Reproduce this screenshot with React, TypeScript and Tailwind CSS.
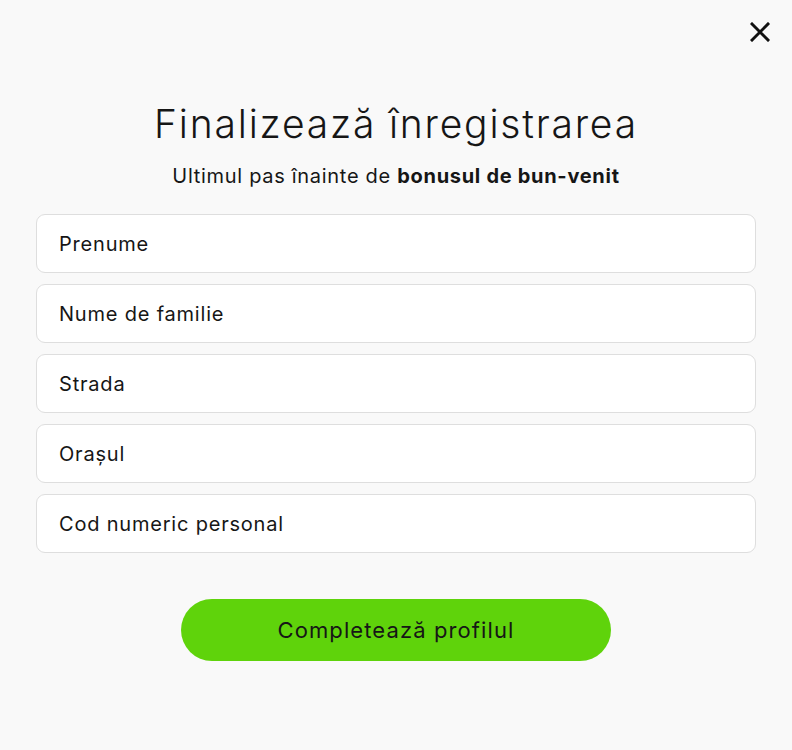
import React from "react";

const fields = ["Prenume", "Nume de familie", "Strada", "Orașul", "Cod numeric personal"];

export default function App() {
  return (
    <div
      className="relative h-[750px] w-full bg-[#f9f9f9] text-[#161616]"
      style={{ fontFamily: "Inter, 'Noto Sans', sans-serif" }}
    >
      <button type="button" aria-label="Închide" className="absolute right-[20px] top-[20px] p-[2px]">
        <svg width="20" height="20" viewBox="0 0 20 20" fill="none" stroke="#111" strokeWidth="3" strokeLinecap="square">
          <path d="M2 2L18 18M18 2L2 18" />
        </svg>
      </button>

      <div className="flex flex-col items-center px-[36px] pt-[100px]">
        <h1 className="text-[39px] font-light leading-[48px] tracking-[1.8px]">Finalizează înregistrarea</h1>
        <p className="mt-[15px] text-[20px] leading-[26px] tracking-[0.7px]">
          Ultimul pas înainte de <span className="font-bold">bonusul de bun-venit</span>
        </p>

        <div className="mt-[25px] flex w-full flex-col gap-[11px]">
          {fields.map((f) => (
            <input
              key={f}
              placeholder={f}
              className="h-[59px] w-full rounded-[9px] border border-[#dedede] bg-white px-[22px] text-[20px] tracking-[0.8px] text-[#161616] placeholder:text-[#161616] focus:outline-none"
            />
          ))}
        </div>

        <button
          type="button"
          className="mt-[46px] h-[62px] w-[430px] rounded-full bg-[#5fd30b] text-[22px] tracking-[1.1px] text-[#161616]"
        >
          Completează profilul
        </button>
      </div>
    </div>
  );
}
